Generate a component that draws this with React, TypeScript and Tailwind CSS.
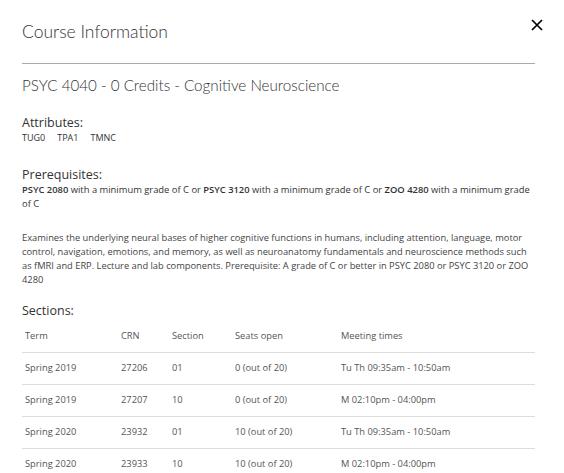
import React from 'react'

const rows = [
  { term: 'Spring 2019', crn: '27206', section: '01', seats: '0 (out of 20)', times: 'Tu Th 09:35am - 10:50am' },
  { term: 'Spring 2019', crn: '27207', section: '10', seats: '0 (out of 20)', times: 'M 02:10pm - 04:00pm' },
  { term: 'Spring 2020', crn: '23932', section: '01', seats: '10 (out of 20)', times: 'Tu Th 09:35am - 10:50am' },
  { term: 'Spring 2020', crn: '23933', section: '10', seats: '10 (out of 20)', times: 'M 02:10pm - 04:00pm' },
]

const heading = "font-['Lato',sans-serif]"
const body = "font-['Open_Sans',sans-serif]"

export default function App() {
  return (
    <div className="h-[473px] w-[564px] overflow-hidden bg-white">
      <div className="h-full rounded-[4px] bg-white pl-[22px] pr-[29px] text-[#333]">
        <div className="flex h-[64px] items-start justify-between border-b border-[#aaa]">
          <h2 className={`${heading} mt-[19px] text-[17.5px] font-light text-[#333]`}>Course Information</h2>
          <button className="mt-[13px] mr-[-14px] flex h-[24px] w-[24px] items-center justify-center text-black">
            <svg width="12" height="12" viewBox="0 0 12 12">
              <path d="M1 1 L11 11 M11 1 L1 11" stroke="currentColor" strokeWidth="1.7" />
            </svg>
          </button>
        </div>

        <h3 className={`${heading} mt-[11px] text-[15.2px] font-light leading-[20px] text-[#333]`}>
          PSYC 4040 - 0 Credits - Cognitive Neuroscience
        </h3>

        <div className={`${body} mt-[20px]`}>
          <div className="text-[12.5px] leading-[16px] text-[#333]">Attributes:</div>
          <div className="flex gap-[12px] text-[9px] leading-[14px] text-[#333]">
            <span>TUG0</span>
            <span>TPA1</span>
            <span>TMNC</span>
          </div>

          <div className="mt-[21px] text-[12.5px] leading-[17px] text-[#333]">Prerequisites:</div>
          <p className="text-[9.4px] leading-[14px] text-[#333]">
            <b className="font-semibold">PSYC 2080</b> with a minimum grade of C or <b className="font-semibold">PSYC 3120</b> with a
            minimum grade of C or <b className="font-semibold">ZOO 4280</b> with a minimum grade of C
          </p>

          <p className="mt-[20px] text-[9.3px] leading-[14px] text-[#444]">
            Examines the underlying neural bases of higher cognitive functions in humans, including attention, language, motor
            control, navigation, emotions, and memory, as well as neuroanatomy fundamentals and neuroscience methods such as
            fMRI and ERP. Lecture and lab components. Prerequisite: A grade of C or better in PSYC 2080 or PSYC 3120 or ZOO
            4280
          </p>

          <div className="mt-[16px] text-[12.5px] leading-[16px] text-[#333]">Sections:</div>
          <table className="mt-[1px] w-full border-collapse text-left text-[9.3px] text-[#555]">
            <thead>
              <tr className="h-[32px] border-b border-[#ddd]">
                <th className="w-[99px] pl-[3px] font-normal">Term</th>
                <th className="w-[51px] font-normal">CRN</th>
                <th className="w-[63px] font-normal">Section</th>
                <th className="w-[106px] font-normal">Seats open</th>
                <th className="font-normal">Meeting times</th>
              </tr>
            </thead>
            <tbody>
              {rows.map((r, i) => (
                <tr key={i} className="h-[32px] border-b border-[#ddd]">
                  <td className="pl-[3px]">{r.term}</td>
                  <td>{r.crn}</td>
                  <td>{r.section}</td>
                  <td>{r.seats}</td>
                  <td>{r.times}</td>
                </tr>
              ))}
            </tbody>
          </table>
        </div>
      </div>
    </div>
  )
}
